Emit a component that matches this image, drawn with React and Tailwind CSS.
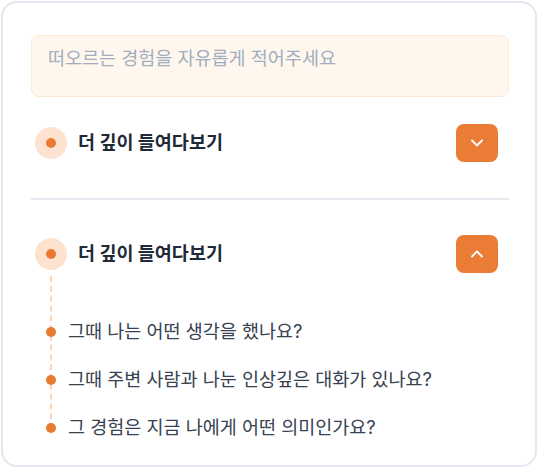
import React, { useState } from 'react';
import { ChevronDown, ChevronUp } from 'lucide-react';

const questions = [
  '그때 나는 어떤 생각을 했나요?',
  '그때 주변 사람과 나눈 인상깊은 대화가 있나요?',
  '그 경험은 지금 나에게 어떤 의미인가요?',
];

function SectionHeader({ open, onToggle }) {
  return (
    <div className="flex items-center justify-between pl-1">
      <div className="flex items-center gap-[11px]">
        <div className="w-8 h-8 rounded-full bg-[#fde3cf] flex items-center justify-center">
          <div className="w-2.5 h-2.5 rounded-full bg-[#ea7a33]" />
        </div>
        <h3 className="text-[18.5px] font-bold text-[#1f2937]">더 깊이 들여다보기</h3>
      </div>
      <button
        onClick={onToggle}
        className="w-[42px] h-[38px] rounded-lg bg-[#ea7c36] flex items-center justify-center text-white mr-[11px]"
      >
        {open ? <ChevronUp className="w-5 h-5" strokeWidth={2.2} /> : <ChevronDown className="w-5 h-5" strokeWidth={2.2} />}
      </button>
    </div>
  );
}

export default function App() {
  const [first, setFirst] = useState(false);
  const [second, setSecond] = useState(true);

  return (
    <div className="p-px font-['Inter','Noto_Sans_CJK_KR',sans-serif]">
      <div className="w-[536px] h-[466px] border-2 border-[#e2e8f0] rounded-2xl bg-white px-7 pt-8">
        <textarea
          placeholder="떠오르는 경험을 자유롭게 적어주세요"
          className="block w-[478px] h-[62px] resize-none rounded-lg border border-[#fde9d4] bg-[#fff7ed] px-4 py-[9px] text-[18.5px] text-[#374151] placeholder:text-[#a0aec0] outline-none"
        />

        <div className="mt-[27px] w-[478px]">
          <SectionHeader open={first} onToggle={() => setFirst(!first)} />
        </div>

        <div className="mt-[36px] w-[478px] h-[2px] bg-[#e5e9f0]" />

        <div className="mt-[35px] w-[478px]">
          <SectionHeader open={second} onToggle={() => setSecond(!second)} />
          {second && (
            <div className="relative mt-[3px] ml-[15px] pt-[43px]">
              <div className="absolute left-[4px] top-0 bottom-[12px] border-l-2 border-dashed border-[#fdd5b4]" />
              <ul className="flex flex-col gap-[22px]">
                {questions.map((q) => (
                  <li key={q} className="relative flex items-center gap-[12px] h-[26px]">
                    <span className="w-[10px] h-[10px] rounded-full bg-[#ea7a33] shrink-0" />
                    <span className="text-[18.5px] text-[#374151]">{q}</span>
                  </li>
                ))}
              </ul>
            </div>
          )}
        </div>
      </div>
    </div>
  );
}
